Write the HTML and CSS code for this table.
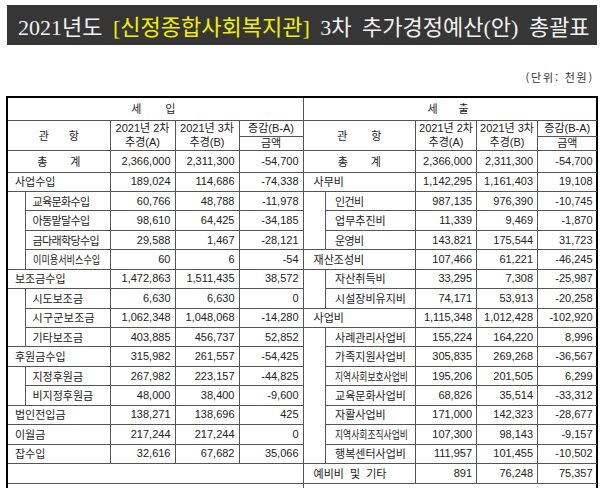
FILE: index.html
```html
<!DOCTYPE html>
<html lang="ko">
<head>
<meta charset="utf-8">
<title>2021년도 3차 추가경정예산(안) 총괄표</title>
<link rel="stylesheet" href="styles.css">
</head>
<body>
<div class="title-bar"><span class="title">2021년도 <span class="hl">[신정종합사회복지관]</span> 3차 추가경정예산(안) 총괄표</span></div>
<div class="unit">(단위: 천원)</div>
<div class="sheet">
  <table class="tbl tbl-in">
    <colgroup><col class="c-ind-l"><col class="c-lab-l"><col class="c-n1-l"><col class="c-n2-l"><col class="c-n3-l"></colgroup>
    <tr class="r-sec"><td colspan="5" class="sec">세입</td></tr>
    <tr class="r-h1"><td colspan="2" rowspan="2" class="hd spread">관항</td><td rowspan="2" class="hd two">2021년 2차<br>추경(A)</td><td rowspan="2" class="hd two">2021년 3차<br>추경(B)</td><td class="hd">증감(B-A)</td></tr>
    <tr class="r-h2"><td class="hd">금액</td></tr>
    <tr class="r-tot"><td colspan="2" class="hd spread2">총계</td><td class="num">2,366,000</td><td class="num">2,311,300</td><td class="num">-54,700</td></tr>
    <tr class="r"><td colspan="2" class="lab">사업수입</td><td class="num">189,024</td><td class="num">114,686</td><td class="num">-74,338</td></tr>
    <tr class="r"><td rowspan="4" class="ind"></td><td class="lab sub narrow">교육문화수입</td><td class="num">60,766</td><td class="num">48,788</td><td class="num">-11,978</td></tr>
    <tr class="r"><td class="lab sub narrow">아동맡달수입</td><td class="num">98,610</td><td class="num">64,425</td><td class="num">-34,185</td></tr>
    <tr class="r"><td class="lab sub narrow">금다래학당수입</td><td class="num">29,588</td><td class="num">1,467</td><td class="num">-28,121</td></tr>
    <tr class="r"><td class="lab sub"><span class="sq sq-84">이미용서비스수입</span></td><td class="num">60</td><td class="num">6</td><td class="num">-54</td></tr>
    <tr class="r"><td colspan="2" class="lab">보조금수입</td><td class="num">1,472,863</td><td class="num">1,511,435</td><td class="num">38,572</td></tr>
    <tr class="r"><td rowspan="3" class="ind"></td><td class="lab sub">시도보조금</td><td class="num">6,630</td><td class="num">6,630</td><td class="num">0</td></tr>
    <tr class="r"><td class="lab sub wide">시구군보조금</td><td class="num">1,062,348</td><td class="num">1,048,068</td><td class="num">-14,280</td></tr>
    <tr class="r"><td class="lab sub">기타보조금</td><td class="num">403,885</td><td class="num">456,737</td><td class="num">52,852</td></tr>
    <tr class="r"><td colspan="2" class="lab">후원금수입</td><td class="num">315,982</td><td class="num">261,557</td><td class="num">-54,425</td></tr>
    <tr class="r"><td rowspan="2" class="ind"></td><td class="lab sub">지정후원금</td><td class="num">267,982</td><td class="num">223,157</td><td class="num">-44,825</td></tr>
    <tr class="r"><td class="lab sub">비지정후원금</td><td class="num">48,000</td><td class="num">38,400</td><td class="num">-9,600</td></tr>
    <tr class="r"><td colspan="2" class="lab">법인전입금</td><td class="num">138,271</td><td class="num">138,696</td><td class="num">425</td></tr>
    <tr class="r"><td colspan="2" class="lab">이월금</td><td class="num">217,244</td><td class="num">217,244</td><td class="num">0</td></tr>
    <tr class="r"><td colspan="2" class="lab">잡수입</td><td class="num">32,616</td><td class="num">67,682</td><td class="num">35,066</td></tr>
    <tr class="r"><td colspan="5"></td></tr>
    <tr class="r"><td colspan="5"></td></tr>
  </table>
  <table class="tbl tbl-out">
    <colgroup><col class="c-ind-r"><col class="c-lab-r"><col class="c-n1-r"><col class="c-n2-r"><col class="c-n3-r"></colgroup>
    <tr class="r-sec"><td colspan="5" class="sec sec-r">세출</td></tr>
    <tr class="r-h1"><td colspan="2" rowspan="2" class="hd spread spread-r">관항</td><td rowspan="2" class="hd two">2021년 2차<br>추경(A)</td><td rowspan="2" class="hd two">2021년 3차<br>추경(B)</td><td class="hd">증감(B-A)</td></tr>
    <tr class="r-h2"><td class="hd">금액</td></tr>
    <tr class="r-tot"><td colspan="2" class="hd spread2">총계</td><td class="num">2,366,000</td><td class="num">2,311,300</td><td class="num">-54,700</td></tr>
    <tr class="r"><td colspan="2" class="lab">사무비</td><td class="num">1,142,295</td><td class="num">1,161,403</td><td class="num">19,108</td></tr>
    <tr class="r"><td rowspan="3" class="ind"></td><td class="lab sub narrow">인건비</td><td class="num">987,135</td><td class="num">976,390</td><td class="num">-10,745</td></tr>
    <tr class="r"><td class="lab sub">업무추진비</td><td class="num">11,339</td><td class="num">9,469</td><td class="num">-1,870</td></tr>
    <tr class="r"><td class="lab sub narrow">운영비</td><td class="num">143,821</td><td class="num">175,544</td><td class="num">31,723</td></tr>
    <tr class="r"><td colspan="2" class="lab">재산조성비</td><td class="num">107,466</td><td class="num">61,221</td><td class="num">-46,245</td></tr>
    <tr class="r"><td rowspan="2" class="ind"></td><td class="lab sub">자산취득비</td><td class="num">33,295</td><td class="num">7,308</td><td class="num">-25,987</td></tr>
    <tr class="r"><td class="lab sub">시설장비유지비</td><td class="num">74,171</td><td class="num">53,913</td><td class="num">-20,258</td></tr>
    <tr class="r"><td colspan="2" class="lab">사업비</td><td class="num">1,115,348</td><td class="num">1,012,428</td><td class="num">-102,920</td></tr>
    <tr class="r"><td rowspan="7" class="ind"></td><td class="lab sub">사례관리사업비</td><td class="num">155,224</td><td class="num">164,220</td><td class="num">8,996</td></tr>
    <tr class="r"><td class="lab sub">가족지원사업비</td><td class="num">305,835</td><td class="num">269,268</td><td class="num">-36,567</td></tr>
    <tr class="r"><td class="lab sub"><span class="sq sq-81">지역사회보호사업비</span></td><td class="num">195,206</td><td class="num">201,505</td><td class="num">6,299</td></tr>
    <tr class="r"><td class="lab sub">교육문화사업비</td><td class="num">68,826</td><td class="num">35,514</td><td class="num">-33,312</td></tr>
    <tr class="r"><td class="lab sub">자활사업비</td><td class="num">171,000</td><td class="num">142,323</td><td class="num">-28,677</td></tr>
    <tr class="r"><td class="lab sub"><span class="sq sq-81">지역사회조직사업비</span></td><td class="num">107,300</td><td class="num">98,143</td><td class="num">-9,157</td></tr>
    <tr class="r"><td class="lab sub">행복센터사업비</td><td class="num">111,957</td><td class="num">101,455</td><td class="num">-10,502</td></tr>
    <tr class="r"><td colspan="2" class="lab spaced">예비비 및 기타</td><td class="num">891</td><td class="num">76,248</td><td class="num">75,357</td></tr>
    <tr class="r"><td colspan="5"></td></tr>
  </table>
</div>
</body>
</html>
```
FILE: styles.css
```css
html, body {
  margin: 0;
  padding: 0;
  background: #fff;
  overflow: hidden;
}

body {
  font-family: "Liberation Sans", "Noto Sans CJK KR", sans-serif;
  color: #222;
}

.title-bar {
  margin: 5px 3px 0 7px;
  height: 40px;
  background: #363636;
  display: flex;
  align-items: center;
  padding-left: 11px;
}

.title {
  font-family: "Liberation Serif", "Noto Sans CJK KR", serif;
  font-size: 22px;
  color: #f2f2f2;
  word-spacing: 5px;
  white-space: nowrap;
}

.hl {
  color: #f4f000;
}

.unit {
  margin-top: 26px;
  padding-right: 6px;
  text-align: right;
  font-family: "Noto Sans CJK KR", sans-serif;
  font-size: 11px;
  letter-spacing: 1.8px;
  line-height: 13px;
  color: #333;
}

.sheet {
  margin: 12px 0 0 6px;
  width: 588px;
  border: 2px solid #000;
  border-bottom: none;
  display: flex;
  align-items: flex-start;
}

.tbl {
  border-collapse: collapse;
  table-layout: fixed;
  border: hidden;
}

.tbl-in {
  width: 295px;
  border-right: 1px solid #555;
}

.tbl-out {
  width: 293px;
}

.c-ind-l { width: 17px; }
.c-lab-l { width: 85px; }
.c-n1-l { width: 65px; }
.c-n2-l { width: 64px; }
.c-n3-l { width: 64px; }

.c-ind-r { width: 22px; }
.c-lab-r { width: 90px; }
.c-n1-r { width: 61px; }
.c-n2-r { width: 61px; }
.c-n3-r { width: 59px; }

.tbl td {
  border: 1px solid #555;
  padding: 0 4px 0 0;
  font-size: 11px;
  line-height: 13px;
  white-space: nowrap;
  overflow: hidden;
  color: #222;
}

.r-sec { height: 22px; }
.r-h1 { height: 16px; }
.r-h2 { height: 14px; }
.r-tot { height: 22px; }
.r { height: 19.44px; }

.sec {
  text-align: center;
  font-family: "Noto Sans CJK KR", sans-serif;
  font-size: 11px;
  letter-spacing: 24px;
  text-indent: 24px;
}

.sec-r {
  letter-spacing: 21px;
  text-indent: 21px;
}

.hd {
  text-align: center;
  padding: 0 !important;
}

.two {
  line-height: 14px !important;
}

.spread {
  font-family: "Noto Sans CJK KR", sans-serif;
  font-size: 11px;
  letter-spacing: 20px;
  text-indent: 20px;
}

.spread-r {
  letter-spacing: 24px;
  text-indent: 24px;
}

.spread2 {
  font-family: "Noto Sans CJK KR", sans-serif;
  font-size: 11px;
  letter-spacing: 23px;
  text-indent: 23px;
}

.num {
  text-align: right;
}

.tbl .lab {
  text-align: left;
  font-family: "Noto Sans CJK KR", sans-serif;
  font-size: 11px;
  letter-spacing: 0;
  padding-left: 7px;
}

.tbl .lab.narrow {
  letter-spacing: -0.6px;
}

.tbl .lab.wide {
  letter-spacing: 0.3px;
}

.tbl .lab.spaced {
  word-spacing: 3px;
}

.tbl-out .lab {
  padding-left: 10px;
}

.tbl .lab.sub {
  padding-left: 7px;
}

.tbl-out .lab.sub {
  padding-left: 9px;
}

.sq {
  display: inline-block;
  transform-origin: left center;
}

.sq-84 {
  transform: scaleX(0.83);
}

.sq-81 {
  transform: scaleX(0.8);
}
```
